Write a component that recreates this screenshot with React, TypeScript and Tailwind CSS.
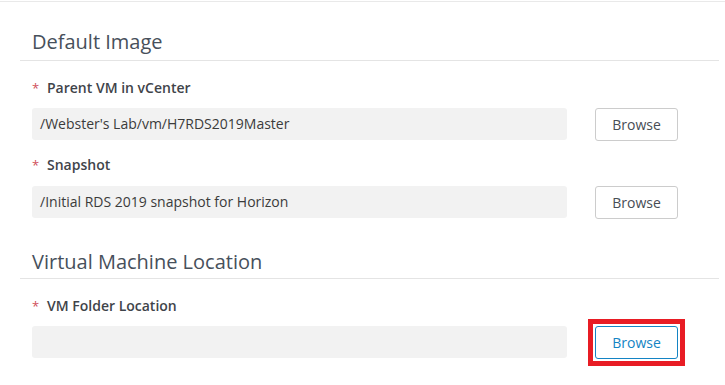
import type { ReactNode } from 'react';

function SectionHeading({ children, className = '' }: { children: ReactNode; className?: string }) {
  return (
    <div className={`border-b border-[#e4e4e4] pl-[12px] ${className}`}>
      <h2 className="text-[20px] leading-[28px] font-normal text-[#47505b]">{children}</h2>
    </div>
  );
}

function FieldLabel({ children, className = '' }: { children: ReactNode; className?: string }) {
  return (
    <div className={`flex items-center h-[20px] ${className}`}>
      <span className="w-[15px] text-[13px] leading-[20px] text-[#d0505a]">*</span>
      <span className="text-[14px] leading-[20px] font-semibold text-[#3f444a]">{children}</span>
    </div>
  );
}

function PathInput({ value }: { value: string }) {
  return (
    <div className="w-[535px] h-[32px] rounded-[3px] bg-[#f2f2f2] pl-[8px] text-[14px] leading-[32px] text-[#3b3b3b] truncate">
      {value}
    </div>
  );
}

function BrowseButton({ active = false }: { active?: boolean }) {
  return (
    <button
      type="button"
      className={`w-[83px] h-[33px] rounded-[3px] border bg-white text-[14px] leading-[20px] ${
        active ? 'border-[#1484c4] text-[#1484c4]' : 'border-[#cccccc] text-[#474d55]'
      }`}
    >
      Browse
    </button>
  );
}

export default function App() {
  return (
    <div className="w-[725px] h-[385px] overflow-hidden bg-white font-['Open_Sans',sans-serif]">
      <div className="mt-px h-px bg-[#e9e9e9]" />
      <div className="pl-[20px] pr-[6px]">
        <SectionHeading className="mt-[26px] pb-[4px]">Default Image</SectionHeading>

        <div className="pl-[12px]">
          <FieldLabel className="mt-[17px]">Parent VM in vCenter</FieldLabel>
          <div className="mt-[10px] flex items-start">
            <PathInput value="/Webster's Lab/vm/H7RDS2019Master" />
            <div className="ml-[28px]">
              <BrowseButton />
            </div>
          </div>

          <FieldLabel className="mt-[14px]">Snapshot</FieldLabel>
          <div className="mt-[11px] flex items-start">
            <PathInput value="/Initial RDS 2019 snapshot for Horizon" />
            <div className="ml-[28px]">
              <BrowseButton />
            </div>
          </div>
        </div>

        <SectionHeading className="mt-[29px] pb-[2px]">Virtual Machine Location</SectionHeading>

        <div className="pl-[12px]">
          <FieldLabel className="mt-[17px]">VM Folder Location</FieldLabel>
          <div className="mt-[10px] flex items-start">
            <PathInput value="" />
            <div className="ml-[21px] -my-[7px] border-[5px] border-[#e81c24] p-[2px]">
              <BrowseButton active />
            </div>
          </div>
        </div>
      </div>
    </div>
  );
}
